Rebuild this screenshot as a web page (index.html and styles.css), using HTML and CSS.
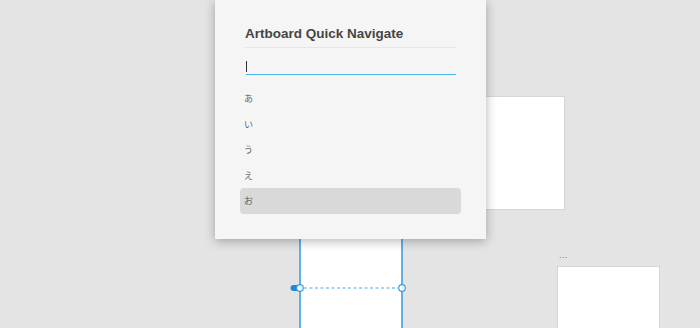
FILE: index.html
```html
<!DOCTYPE html>
<html lang="ja">
<head>
    <meta charset="UTF-8">
    <meta name="viewport" content="width=device-width, initial-scale=1.0">
    <title>Artboard Quick Navigate</title>
    <link rel="stylesheet" href="styles.css">
</head>
<body>

    <div class="canvas">
        <!-- Artboards -->
        <div class="artboard artboard-right"></div>
        <div class="artboard artboard-selected"></div>
        <div class="artboard-name">...</div>
        <div class="artboard artboard-bottom"></div>

        <!-- Selection handles -->
        <svg class="handles" width="700" height="328" viewBox="0 0 700 328">
            <rect x="290.5" y="285" width="9.5" height="6" rx="3" fill="#1a8ae0"/>
            <line x1="304" y1="288" x2="398" y2="288" stroke="#4aa6e6" stroke-width="1" stroke-dasharray="3 2.5"/>
            <circle cx="300" cy="288" r="3.3" fill="#fff" stroke="#3a9de4" stroke-width="1.2"/>
            <circle cx="402" cy="288" r="3.3" fill="#fff" stroke="#3a9de4" stroke-width="1.2"/>
        </svg>

        <!-- Quick navigate dialog -->
        <div class="dialog">
            <h3 class="dialog-title">Artboard Quick Navigate</h3>
            <div class="search">
                <span class="caret"></span>
            </div>
            <ul class="results">
                <li>あ</li>
                <li>い</li>
                <li>う</li>
                <li>え</li>
                <li class="active">お</li>
            </ul>
        </div>
    </div>

</body>
</html>
```
FILE: styles.css
```css
body {
    margin: 0;
    background-color: #e4e4e4;
    font-family: "Liberation Sans", "Noto Sans CJK JP", sans-serif;
}

.canvas {
    position: relative;
    width: 700px;
    height: 328px;
    overflow: hidden;
}

.artboard {
    position: absolute;
    background-color: #fff;
    border: 1px solid #d6d6d6;
    box-sizing: border-box;
}

.artboard-right {
    left: 420px;
    top: 96px;
    width: 145px;
    height: 114px;
}

.artboard-selected {
    left: 299px;
    top: 180px;
    width: 104px;
    height: 160px;
    border: none;
    border-left: 2px solid #62aee6;
    border-right: 2px solid #62aee6;
}

.artboard-bottom {
    left: 557px;
    top: 266px;
    width: 103px;
    height: 80px;
}

.artboard-name {
    position: absolute;
    left: 559px;
    top: 250px;
    font-size: 9px;
    color: #777;
    letter-spacing: 0.5px;
}

.handles {
    position: absolute;
    left: 0;
    top: 0;
}

.dialog {
    position: absolute;
    left: 215px;
    top: 0;
    width: 271px;
    height: 239px;
    box-sizing: border-box;
    padding: 26px 30px 0;
    background-color: #f5f5f5;
    box-shadow: 0 2px 10px rgba(0, 0, 0, 0.3);
}

.dialog-title {
    margin: 0;
    padding-bottom: 5px;
    font-size: 13.5px;
    line-height: 16px;
    font-weight: 700;
    color: #454545;
    border-bottom: 1px solid #e6e6e6;
}

.search {
    margin: 12px 0 0 1px;
    height: 14px;
    border-bottom: 1px solid #4ab4ea;
    display: flex;
    align-items: flex-start;
}

.caret {
    display: block;
    width: 1px;
    height: 11px;
    margin-top: 1px;
    background-color: #333;
}

.results {
    list-style: none;
    margin: 11px -5px 0;
    padding: 0;
}

.results li {
    height: 25.5px;
    display: flex;
    align-items: center;
    padding-left: 4px;
    font-size: 9px;
    color: #666;
    border-radius: 4px;
}

.results li.active {
    background-color: #d9d9d9;
}
```
